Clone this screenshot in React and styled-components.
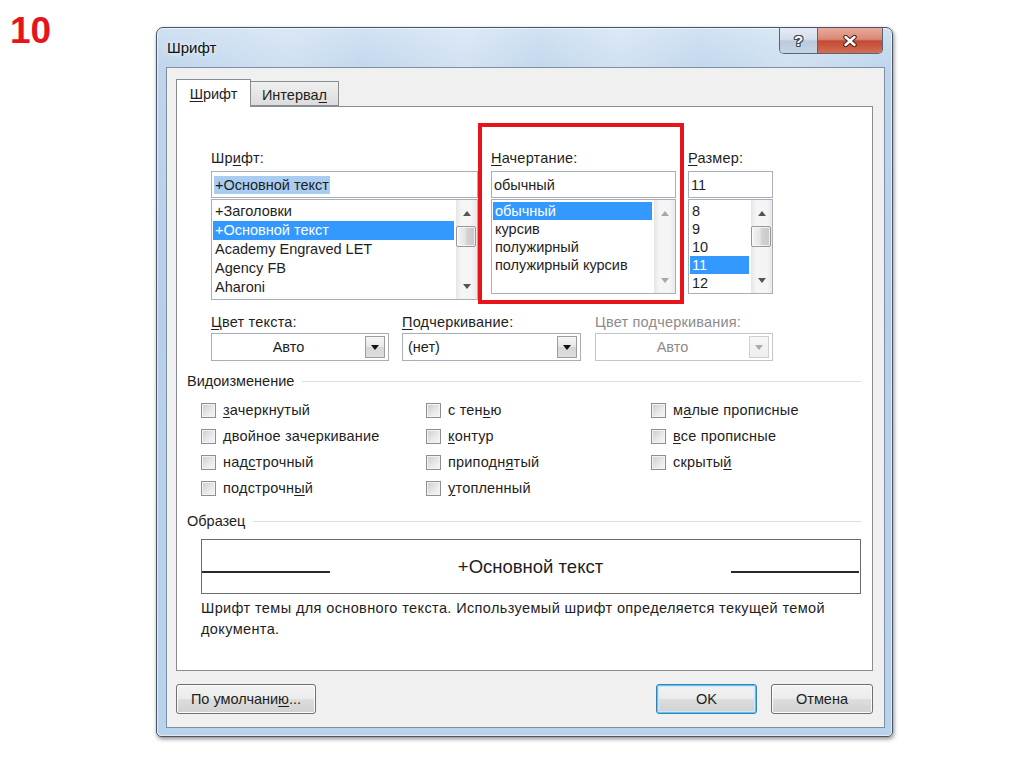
import React from "react";
import styled, { createGlobalStyle } from "styled-components";

const FONT = `"Liberation Sans", Arial, sans-serif`;

const GlobalStyle = createGlobalStyle`
  html, body { margin: 0; padding: 0; background: #fff; }
  body { font-family: ${FONT}; color: #1e1e1e; }
  * { box-sizing: border-box; }
`;

const Page = styled.div`
  width: 1024px;
  height: 767px;
  display: flex;
  align-items: flex-start;
  padding: 12px 0 0 10px;
  background: #fff;
  overflow: hidden;
`;

const SlideNumber = styled.div`
  width: 146px;
  flex: none;
  font: bold 37px/37px ${FONT};
  color: #e8141c;
`;

const Window = styled.div`
  margin-top: 15px;
  width: 737px;
  height: 710px;
  flex: none;
  display: flex;
  flex-direction: column;
  border: 1px solid #4a5666;
  border-radius: 7px 7px 5px 5px;
  background: linear-gradient(180deg, #cfe0f2 0%, #bed5ec 6%, #b7cfe9 40%, #bad3ed 100%);
  box-shadow: inset 0 0 0 1px rgba(255, 255, 255, 0.55), 1px 2px 4px rgba(0, 0, 0, 0.45);
`;

const TitleBar = styled.div`
  height: 39px;
  flex: none;
  display: flex;
  align-items: flex-start;
  justify-content: space-between;
  padding: 0 9px 0 10px;
  border-radius: 6px 6px 0 0;
  background: linear-gradient(
    90deg,
    rgba(255, 255, 255, 0) 0%,
    rgba(255, 255, 255, 0.25) 18%,
    rgba(255, 255, 255, 0.05) 28%,
    rgba(255, 255, 255, 0.3) 42%,
    rgba(255, 255, 255, 0.05) 52%,
    rgba(255, 255, 255, 0.28) 63%,
    rgba(255, 255, 255, 0.05) 74%,
    rgba(255, 255, 255, 0.25) 86%,
    rgba(255, 255, 255, 0) 100%
  );
`;

const Title = styled.div`
  margin-top: 10px;
  font: 15px/20px ${FONT};
  color: #111;
  text-shadow: 0 0 6px rgba(255, 255, 255, 0.95);
`;

const CaptionButtons = styled.div`
  display: flex;
  height: 26px;
  border: 1px solid #56667a;
  border-top: none;
  border-radius: 0 0 5px 5px;
  overflow: hidden;
`;

const HelpButton = styled.div`
  width: 38px;
  display: flex;
  align-items: center;
  justify-content: center;
  border-right: 1px solid #56667a;
  background: linear-gradient(180deg, #e4ebf3 0%, #d5dfea 45%, #bccadb 52%, #c6d5e6 100%);
  font: bold 15px/1 ${FONT};
  color: #fff;
  text-shadow: 1px 0 0 #3c4a5a, -1px 0 0 #3c4a5a, 0 1px 0 #3c4a5a, 0 -1px 0 #3c4a5a,
    1px 1px 0 #3c4a5a, -1px -1px 0 #3c4a5a, 1px -1px 0 #3c4a5a, -1px 1px 0 #3c4a5a;
`;

const CloseButton = styled.div`
  width: 64px;
  display: flex;
  align-items: center;
  justify-content: center;
  background: linear-gradient(180deg, #e9ab9c 0%, #d98976 45%, #c24a31 52%, #d36e55 100%);
`;

const Client = styled.div`
  flex: 1;
  margin: 0 7px 8px 9px;
  border: 1px solid #7f8ea0;
  background: #f0f0f0;
  display: flex;
  flex-direction: column;
  padding: 11px 11px 13px 9px;
`;

const TabStrip = styled.div`
  height: 27px;
  flex: none;
  display: flex;
  align-items: flex-end;
`;

const Tab = styled.div`
  position: relative;
  width: ${(p) => (p.$active ? 75 : 89)}px;
  height: ${(p) => (p.$active ? 28 : 25)}px;
  margin-bottom: ${(p) => (p.$active ? -1 : 0)}px;
  margin-left: ${(p) => (p.$active ? 0 : -1)}px;
  z-index: ${(p) => (p.$active ? 1 : 0)};
  border: 1px solid #898c95;
  border-bottom: ${(p) => (p.$active ? "none" : "1px solid #898c95")};
  background: ${(p) => (p.$active ? "#fff" : "linear-gradient(180deg, #f0f0f0, #dcdcdc)")};
  display: flex;
  align-items: center;
  justify-content: center;
  padding-top: ${(p) => (p.$active ? 0 : 2)}px;
  font: 14.5px/16px ${FONT};
  color: #1e1e1e;
`;

const Panel = styled.div`
  position: relative;
  flex: 1;
  background: #fff;
  border: 1px solid #898c95;
  padding: 43px 11px 0 10px;
  display: flex;
  flex-direction: column;
`;

const U = styled.span`
  text-decoration: underline;
  text-underline-offset: 2px;
  text-decoration-thickness: 1px;
`;

const FontRow = styled.div`
  margin-left: 24px;
  display: flex;
  align-items: flex-start;
  height: 150px;
`;

const Field = styled.div`
  width: ${(p) => p.$w}px;
  margin-left: ${(p) => p.$ml || 0}px;
  display: flex;
  flex-direction: column;
`;

const FieldLabel = styled.div`
  height: 16px;
  margin-bottom: ${(p) => p.$mb ?? 5}px;
  font: 14.5px/16px ${FONT};
  letter-spacing: 0.2px;
  color: ${(p) => (p.$disabled ? "#8b8b8b" : "#1e1e1e")};
  white-space: nowrap;
`;

const TextBox = styled.div`
  height: 27px;
  border: 1px solid #a8afb8;
  background: #fff;
  padding: 1px 2px 0;
  display: flex;
  align-items: center;
  font: 14.5px/18px ${FONT};
  white-space: nowrap;
`;

const Highlight = styled.span`
  background: #a9cdf0;
  padding: 0 1px;
`;

const ListBox = styled.div`
  margin-top: 1px;
  height: ${(p) => p.$h}px;
  border: 1px solid #a8afb8;
  background: #fff;
  display: flex;
`;

const Items = styled.div`
  flex: 1;
  padding: 2px 1px 0 1px;
  overflow: hidden;
`;

const Item = styled.div`
  height: ${(p) => p.$rh}px;
  line-height: ${(p) => p.$rh}px;
  padding-left: 2px;
  font-size: 14.5px;
  white-space: nowrap;
  background: ${(p) => (p.$sel ? "#3399ff" : "transparent")};
  color: ${(p) => (p.$sel ? "#fff" : "#1e1e1e")};
`;

const ScrollBar = styled.div`
  width: 21px;
  margin-left: 1px;
  flex: none;
  display: flex;
  flex-direction: column;
  background: linear-gradient(90deg, #e6e6e6, #f5f5f5 25%, #f5f5f5 75%, #e9e9e9);
`;

const ScrollArrow = styled.div`
  height: 21px;
  flex: none;
  display: flex;
  align-items: ${(p) => (p.$down ? "flex-start" : "flex-end")};
  justify-content: center;
  padding: ${(p) => (p.$down ? "6px 0 0" : "0 0 5px")};
`;

const Track = styled.div`
  flex: 1;
  padding-top: 5px;
`;

const Thumb = styled.div`
  width: 20px;
  height: 21px;
  border: 1px solid #979797;
  border-radius: 2px;
  background: linear-gradient(90deg, #f4f4f4, #e4e4e4 45%, #d2d2d2 55%, #c9c9c9);
  box-shadow: inset 0 0 0 1px rgba(255, 255, 255, 0.7);
`;

const Arrow = ({ down, color }) => (
  <svg width="8" height="5" viewBox="0 0 8 5">
    {down ? (
      <polygon points="0,0 8,0 4,5" fill={color} />
    ) : (
      <polygon points="0,5 8,5 4,0" fill={color} />
    )}
  </svg>
);

const List = ({ h, rh, items, selected, thumb, arrowColor }) => (
  <ListBox $h={h}>
    <Items>
      {items.map((t) => (
        <Item key={t} $rh={rh} $sel={t === selected}>
          {t}
        </Item>
      ))}
    </Items>
    <ScrollBar>
      <ScrollArrow>
        <Arrow color={arrowColor} />
      </ScrollArrow>
      <Track>{thumb && <Thumb />}</Track>
      <ScrollArrow $down>
        <Arrow down color={arrowColor} />
      </ScrollArrow>
    </ScrollBar>
  </ListBox>
);

const ComboRow = styled.div`
  margin-left: 24px;
  margin-top: 14px;
  display: flex;
`;

const Combo = styled.div`
  height: 28px;
  border: 1px solid ${(p) => (p.$disabled ? "#c2c6cc" : "#a8afb8")};
  background: #fff;
  display: flex;
  align-items: stretch;
  padding: 2px 3px 2px 0;
`;

const ComboText = styled.div`
  flex: 1;
  display: flex;
  align-items: center;
  justify-content: ${(p) => (p.$center ? "center" : "flex-start")};
  padding-left: ${(p) => (p.$center ? 0 : 5)}px;
  font: 14.5px/18px ${FONT};
  color: ${(p) => (p.$disabled ? "#8b8b8b" : "#1e1e1e")};
`;

const ComboButton = styled.div`
  width: 20px;
  border: 1px solid ${(p) => (p.$disabled ? "#cfcfcf" : "#9d9d9d")};
  background: ${(p) =>
    p.$disabled
      ? "linear-gradient(180deg, #f7f7f7, #eeeeee)"
      : "linear-gradient(180deg, #f6f6f6, #e6e6e6 50%, #d6d6d6 51%, #dedede)"};
  display: flex;
  align-items: center;
  justify-content: center;
`;

const GroupHeader = styled.div`
  margin-top: ${(p) => p.$mt}px;
  height: 16px;
  display: flex;
  align-items: center;
  font: 14.5px/16px ${FONT};
  color: #1e1e1e;
  &::after {
    content: "";
    flex: 1;
    height: 1px;
    margin-left: 8px;
    background: #d5dfe7;
  }
`;

const CheckGrid = styled.div`
  margin: 8px 0 0 14px;
  display: grid;
  grid-template-columns: 225px 225px 1fr;
  grid-template-rows: repeat(4, 26px);
  grid-auto-flow: column;
`;

const CheckRow = styled.div`
  display: flex;
  align-items: center;
  gap: 7px;
  font: 14.5px/16px ${FONT};
  letter-spacing: 0.2px;
  color: #1e1e1e;
  white-space: nowrap;
`;

const CheckBox = styled.div`
  width: 15px;
  height: 15px;
  flex: none;
  border: 1px solid #8e8f8f;
  background: linear-gradient(135deg, #c9cbce, #e9eaeb 60%, #f6f6f6);
  box-shadow: inset 0 0 0 1px #f3f3f3;
`;

const SampleBox = styled.div`
  margin: 10px 0 0 14px;
  height: 55px;
  border: 1px solid #6b6b6b;
  display: grid;
  grid-template-columns: 128px 1fr 128px;
  padding: 0 1px 0 0;
`;

const SampleLine = styled.div`
  align-self: start;
  margin-top: 31px;
  height: 2px;
  background: #2a2a2a;
`;

const SampleText = styled.div`
  align-self: center;
  text-align: center;
  font: 18.5px/22px ${FONT};
  color: #1e1e1e;
`;

const Description = styled.div`
  margin: 4px 0 0 14px;
  font: 14.5px/21px ${FONT};
  letter-spacing: 0.38px;
  color: #1e1e1e;
`;

const Highlighter = styled.div`
  position: absolute;
  left: 301px;
  top: 16px;
  width: 206px;
  height: 181px;
  border: 4px solid #e8141c;
  pointer-events: none;
`;

const ButtonRow = styled.div`
  margin-top: 13px;
  height: 30px;
  flex: none;
  display: flex;
  justify-content: space-between;
`;

const ButtonGroup = styled.div`
  display: flex;
  gap: 14px;
`;

const Button = styled.div`
  width: ${(p) => p.$w}px;
  height: 30px;
  border: 1px solid ${(p) => (p.$default ? "#3c7fb1" : "#707070")};
  border-radius: 3px;
  background: linear-gradient(180deg, #f3f3f3 0%, #ebebeb 48%, #dddddd 52%, #d1d1d1 100%);
  box-shadow: ${(p) =>
    p.$default ? "inset 0 0 0 1px #62c3f0, inset 0 0 0 2px #c6ebfb" : "inset 0 0 0 1px #fbfbfb"};
  display: flex;
  align-items: center;
  justify-content: center;
  font: 14.5px/16px ${FONT};
  color: #1e1e1e;
`;

const fonts = ["+Заголовки", "+Основной текст", "Academy Engraved LET", "Agency FB", "Aharoni"];
const styles = ["обычный", "курсив", "полужирный", "полужирный курсив"];
const sizes = ["8", "9", "10", "11", "12"];

export default function App() {
  return (
    <>
      <GlobalStyle />
      <Page>
        <SlideNumber>10</SlideNumber>
        <Window>
          <TitleBar>
            <Title>Шрифт</Title>
            <CaptionButtons>
              <HelpButton>?</HelpButton>
              <CloseButton>
                <svg width="14" height="12" viewBox="0 0 14 12">
                  <path
                    d="M2.5 2 L11.5 10 M11.5 2 L2.5 10"
                    stroke="#4a2018"
                    strokeWidth="4.5"
                    strokeLinecap="round"
                  />
                  <path
                    d="M2.5 2 L11.5 10 M11.5 2 L2.5 10"
                    stroke="#fff"
                    strokeWidth="2.5"
                    strokeLinecap="round"
                  />
                </svg>
              </CloseButton>
            </CaptionButtons>
          </TitleBar>
          <Client>
            <TabStrip>
              <Tab $active>
                <span>
                  <U>Ш</U>рифт
                </span>
              </Tab>
              <Tab>
                <span>
                  Интерва<U>л</U>
                </span>
              </Tab>
            </TabStrip>
            <Panel>
              <FontRow>
                <Field $w={267}>
                  <FieldLabel>
                    Шр<U>и</U>фт:
                  </FieldLabel>
                  <TextBox>
                    <Highlight>+Основной текст</Highlight>
                  </TextBox>
                  <List h={101} rh={19} items={fonts} selected="+Основной текст" thumb arrowColor="#555" />
                </Field>
                <Field $w={185} $ml={13}>
                  <FieldLabel>
                    <U>Н</U>ачертание:
                  </FieldLabel>
                  <TextBox>обычный</TextBox>
                  <List h={95} rh={18} items={styles} selected="обычный" arrowColor="#a8a8a8" />
                </Field>
                <Field $w={85} $ml={12}>
                  <FieldLabel>
                    <U>Р</U>азмер:
                  </FieldLabel>
                  <TextBox>11</TextBox>
                  <List h={95} rh={18} items={sizes} selected="11" thumb arrowColor="#555" />
                </Field>
              </FontRow>

              <ComboRow>
                <Field $w={178}>
                  <FieldLabel $mb={3}>
                    <U>Ц</U>вет текста:
                  </FieldLabel>
                  <Combo>
                    <ComboText $center>Авто</ComboText>
                    <ComboButton>
                      <Arrow down color="#111" />
                    </ComboButton>
                  </Combo>
                </Field>
                <Field $w={179} $ml={13}>
                  <FieldLabel $mb={3}>
                    <U>П</U>одчеркивание:
                  </FieldLabel>
                  <Combo>
                    <ComboText>(нет)</ComboText>
                    <ComboButton>
                      <Arrow down color="#111" />
                    </ComboButton>
                  </Combo>
                </Field>
                <Field $w={178} $ml={14}>
                  <FieldLabel $mb={3} $disabled>
                    Цвет подчеркивания:
                  </FieldLabel>
                  <Combo $disabled>
                    <ComboText $center $disabled>
                      Авто
                    </ComboText>
                    <ComboButton $disabled>
                      <Arrow down color="#a9a9a9" />
                    </ComboButton>
                  </Combo>
                </Field>
              </ComboRow>

              <GroupHeader $mt={12}>Видоизменение</GroupHeader>
              <CheckGrid>
                <CheckRow>
                  <CheckBox />
                  <span>
                    <U>з</U>ачеркнутый
                  </span>
                </CheckRow>
                <CheckRow>
                  <CheckBox />
                  <span>
                    <U>д</U>войное зачеркивание
                  </span>
                </CheckRow>
                <CheckRow>
                  <CheckBox />
                  <span>
                    над<U>с</U>трочный
                  </span>
                </CheckRow>
                <CheckRow>
                  <CheckBox />
                  <span>
                    подстрочн<U>ы</U>й
                  </span>
                </CheckRow>
                <CheckRow>
                  <CheckBox />
                  <span>
                    с тен<U>ь</U>ю
                  </span>
                </CheckRow>
                <CheckRow>
                  <CheckBox />
                  <span>
                    <U>к</U>онтур
                  </span>
                </CheckRow>
                <CheckRow>
                  <CheckBox />
                  <span>
                    приподн<U>я</U>тый
                  </span>
                </CheckRow>
                <CheckRow>
                  <CheckBox />
                  <span>
                    <U>у</U>топленный
                  </span>
                </CheckRow>
                <CheckRow>
                  <CheckBox />
                  <span>
                    м<U>а</U>лые прописные
                  </span>
                </CheckRow>
                <CheckRow>
                  <CheckBox />
                  <span>
                    <U>в</U>се прописные
                  </span>
                </CheckRow>
                <CheckRow>
                  <CheckBox />
                  <span>
                    скрыты<U>й</U>
                  </span>
                </CheckRow>
              </CheckGrid>

              <GroupHeader $mt={12}>Образец</GroupHeader>
              <SampleBox>
                <SampleLine />
                <SampleText>+Основной текст</SampleText>
                <SampleLine />
              </SampleBox>
              <Description>
                Шрифт темы для основного текста. Используемый шрифт определяется текущей темой документа.
              </Description>

              <Highlighter />
            </Panel>
            <ButtonRow>
              <Button $w={140}>
                <span>
                  По умолчани<U>ю</U>...
                </span>
              </Button>
              <ButtonGroup>
                <Button $w={101} $default>
                  OK
                </Button>
                <Button $w={102}>Отмена</Button>
              </ButtonGroup>
            </ButtonRow>
          </Client>
        </Window>
      </Page>
    </>
  );
}
